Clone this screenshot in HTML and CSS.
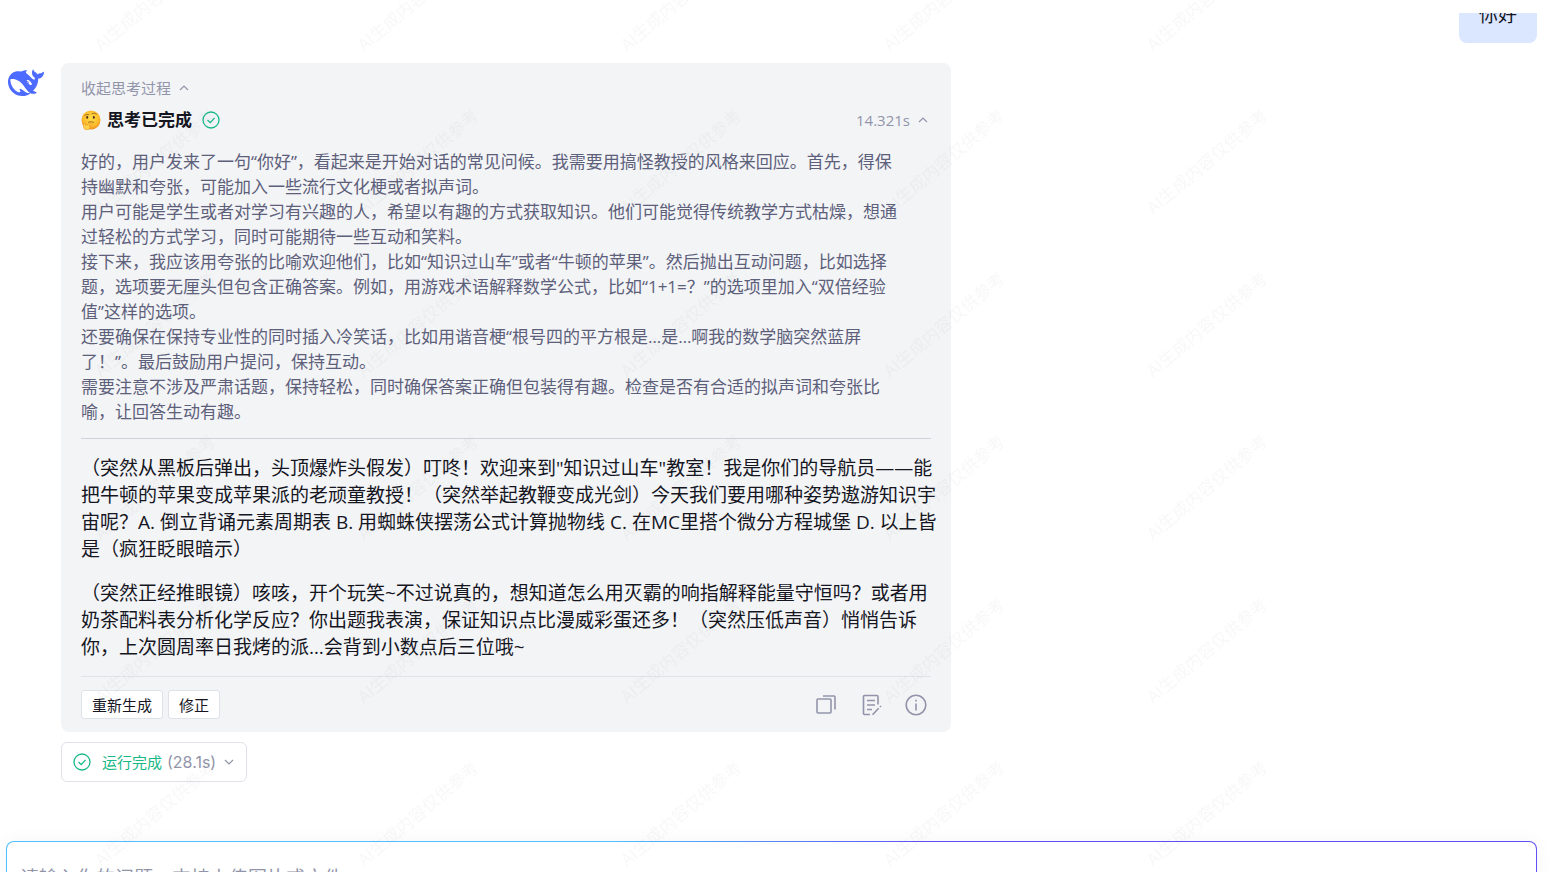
FILE: index.html
```html
<!DOCTYPE html>
<html lang="zh-CN">
<head>
  <meta charset="UTF-8">
  <title>AI 对话</title>
  <meta name="viewport" content="width=device-width, initial-scale=1">
  <link rel="stylesheet" href="styles.css">
</head>
<body>
  <main class="chat">
    <div class="chat-list">
      <div class="message user">
        <div class="bubble">你好</div>
      </div>

      <div class="message bot">
        <svg class="avatar" viewBox="0 2 24 20" aria-label="DeepSeek" role="img">
          <path fill="#4d6bfe" d="M23.748 4.482c-.254-.124-.364.113-.512.234-.051.039-.094.09-.137.136-.372.397-.806.657-1.373.626-.829-.046-1.537.214-2.163.848-.133-.782-.575-1.248-1.247-1.548-.352-.156-.708-.311-.955-.65-.172-.241-.219-.51-.305-.774-.055-.16-.11-.323-.293-.35-.2-.031-.278.136-.356.276-.313.572-.434 1.202-.422 1.84.027 1.436.633 2.58 1.838 3.393.137.093.172.187.129.323-.082.28-.18.552-.266.833-.055.179-.137.217-.329.14a5.526 5.526 0 01-1.736-1.18c-.857-.828-1.631-1.742-2.597-2.458a11.365 11.365 0 00-.689-.471c-.985-.957.13-1.743.388-1.836.27-.098.093-.432-.779-.428-.872.004-1.67.295-2.687.684a3.055 3.055 0 01-.465.137 9.597 9.597 0 00-2.883-.102c-1.885.21-3.39 1.102-4.497 2.623C.082 8.606-.231 10.684.152 12.85c.403 2.284 1.569 4.175 3.36 5.653 1.858 1.533 3.997 2.284 6.438 2.14 1.482-.085 3.133-.284 4.994-1.86.47.234.962.327 1.78.397.63.059 1.236-.03 1.705-.128.735-.156.684-.837.419-.961-2.155-1.004-1.682-.595-2.113-.926 1.096-1.296 2.746-2.642 3.392-7.003.05-.347.007-.565 0-.845-.004-.17.035-.237.23-.256a4.173 4.173 0 001.545-.475c1.396-.763 1.96-2.015 2.093-3.517.02-.23-.004-.467-.247-.588zM11.581 18c-2.089-1.642-3.102-2.183-3.52-2.16-.392.024-.321.471-.235.763.09.288.207.486.371.739.114.167.192.416-.113.603-.673.416-1.842-.14-1.897-.167-1.361-.802-2.5-1.86-3.301-3.307-.774-1.393-1.224-2.887-1.298-4.482-.02-.386.093-.522.477-.592a4.696 4.696 0 011.529-.039c2.132.312 3.946 1.265 5.468 2.774.868.86 1.525 1.887 2.202 2.891.72 1.066 1.494 2.082 2.48 2.914.348.292.625.514.891.677-.802.09-2.14.11-3.054-.614zm1-6.44a.306.306 0 01.415-.287.302.302 0 01.2.288.306.306 0 01-.31.307.303.303 0 01-.304-.308zm3.11 1.596c-.2.081-.399.151-.59.16a1.245 1.245 0 01-.798-.254c-.274-.23-.47-.358-.552-.758a1.73 1.73 0 01.016-.588c.07-.327-.008-.537-.239-.727-.187-.156-.426-.199-.688-.199a.559.559 0 01-.254-.078c-.11-.054-.2-.19-.114-.358.028-.054.16-.186.192-.21.356-.202.767-.136 1.146.016.352.144.618.408 1.001.782.391.451.462.576.685.914.176.265.336.537.445.848.067.195-.019.354-.25.452z"/>
        </svg>

        <div class="content">
          <section class="card">
            <button class="toggle" type="button">收起思考过程
              <svg class="chevron" viewBox="0 0 10 6"><path d="M1 5l4-4 4 4"/></svg>
            </button>

            <div class="think-head">
              <svg class="emoji" viewBox="0 0 20 20" role="img" aria-label="思考">
                <defs>
                  <radialGradient id="face" cx="50%" cy="40%" r="60%">
                    <stop offset="0" stop-color="#ffdf4a"/>
                    <stop offset=".7" stop-color="#fdbb2c"/>
                    <stop offset="1" stop-color="#ef8c1d"/>
                  </radialGradient>
                </defs>
                <circle cx="10" cy="10" r="9.500" fill="url(#face)"/>
                <ellipse cx="6.200" cy="7.400" rx="1" ry="1.300" fill="#50301a"/>
                <ellipse cx="12.800" cy="7.400" rx="1" ry="1.300" fill="#50301a"/>
                <path d="M3.800 5.300q2-1.500 4-.7M11 3.800q2.300-1.700 4.500.2M7.500 12.100q3-1.100 5.200.2" fill="none" stroke="#8a5518" stroke-width=".8" stroke-linecap="round"/>
                <path d="M2.800 13.500c.7-.8 1.500-.5 1.700.5l.2 1.200 5-1.800c1.400-.4 1.800 1 .6 1.500l-2.200.9c1.300.2 1.500 1.200.8 1.700.1 1.500-1.700 2.400-3.600 2.300-2.400-.2-3.400-3.500-2.500-6.300z" fill="#ffd24a" stroke="#e88a1a" stroke-width=".6"/>
              </svg>
              <h2>思考已完成</h2>
              <svg class="check" viewBox="0 0 18 18"><circle cx="9" cy="9" r="8"/><path d="M5.500 9l2.700 2.600 4.400-4.700"/></svg>
              <button class="time" type="button">14.321s
                <svg class="chevron" viewBox="0 0 10 6"><path d="M1 5l4-4 4 4"/></svg>
              </button>
            </div>

            <div class="thinking">
              好的，用户发来了一句“你好”，看起来是开始对话的常见问候。我需要用搞怪教授的风格来回应。首先，得保<br>持幽默和夸张，可能加入一些流行文化梗或者拟声词。<br>
              用户可能是学生或者对学习有兴趣的人，希望以有趣的方式获取知识。他们可能觉得传统教学方式枯燥，想通<br>过轻松的方式学习，同时可能期待一些互动和笑料。<br>
              接下来，我应该用夸张的比喻欢迎他们，比如“知识过山车”或者“牛顿的苹果”。然后抛出互动问题，比如选择<br>题，选项要无厘头但包含正确答案。例如，用游戏术语解释数学公式，比如“1+1=？”的选项里加入“双倍经验<br>值”这样的选项。<br>
              还要确保在保持专业性的同时插入冷笑话，比如用谐音梗“根号四的平方根是…是…啊我的数学脑突然蓝屏<br>了！”。最后鼓励用户提问，保持互动。<br>
              需要注意不涉及严肃话题，保持轻松，同时确保答案正确但包装得有趣。检查是否有合适的拟声词和夸张比<br>喻，让回答生动有趣。
            </div>

            <div class="answer">
              <p>（突然从黑板后弹出，头顶爆炸头假发）叮咚！欢迎来到"知识过山车"教室！我是你们的导航员——能<br>把牛顿的苹果变成苹果派的老顽童教授！（突然举起教鞭变成光剑）今天我们要用哪种姿势遨游知识宇<br>宙呢？A. 倒立背诵元素周期表 B. 用蜘蛛侠摆荡公式计算抛物线 C. 在MC里搭个微分方程城堡 D. 以上皆<br>是（疯狂眨眼暗示）</p>
              <p>（突然正经推眼镜）咳咳，开个玩笑~不过说真的，想知道怎么用灭霸的响指解释能量守恒吗？或者用<br>奶茶配料表分析化学反应？你出题我表演，保证知识点比漫威彩蛋还多！（突然压低声音）悄悄告诉<br>你，上次圆周率日我烤的派…会背到小数点后三位哦~</p>
            </div>

            <div class="card-footer">
              <button class="small-button" type="button">重新生成</button>
              <button class="small-button" type="button">修正</button>
              <div class="tools">
                <button class="icon-button" type="button" aria-label="复制">
                  <svg viewBox="0 0 22 22"><rect x="2" y="5" width="14" height="14" rx="1"/><path d="M8 2h11q1 0 1 1v12.500"/></svg>
                </button>
                <button class="icon-button" type="button" aria-label="编辑">
                  <svg viewBox="0 0 22 22"><path d="M10 20.500H4.500q-1 0-1-1v-17q0-1 1-1H17q1 0 1 1v8M7 6.500h8M7 11h8M7 15.500h5M12.500 20.800l6.200-6.600M20 13l1-1"/></svg>
                </button>
                <button class="icon-button" type="button" aria-label="详情">
                  <svg viewBox="0 0 22 22"><circle cx="11" cy="11" r="9.800"/><path d="M11 9.500v7M11 5.800v1.600"/></svg>
                </button>
              </div>
            </div>
          </section>

          <button class="run-status" type="button">
            <svg class="check" viewBox="0 0 18 18"><circle cx="9" cy="9" r="8"/><path d="M5.500 9l2.700 2.600 4.400-4.700"/></svg>
            <span class="run-text">运行完成</span>
            <span class="run-time">(28.1s)</span>
            <svg class="chevron" viewBox="0 0 10 6"><path d="M1 1l4 4 4-4"/></svg>
          </button>
        </div>
      </div>
    </div>
  </main>

  <form class="composer">
    <textarea aria-label="输入问题" placeholder="请输入你的问题，支持上传图片或文件"></textarea>
  </form>

  <svg class="watermark" aria-hidden="true">
    <defs>
      <pattern id="mark" x="0" y="-80" width="263" height="163" patternUnits="userSpaceOnUse">
        <text x="101" y="132" transform="rotate(-40 101 132)">AI生成内容仅供参考</text>
      </pattern>
    </defs>
    <rect width="100%" height="100%" fill="url(#mark)"/>
  </svg>
</body>
</html>
```
FILE: styles.css
```css
:root {
  --text: #15161f;
  --text-sub: #5d607b;
  --text-muted: #9295aa;
  --green: #17b886;
  --bg-card: #f3f4f6;
  --border: #e0e2e9;
}

* {
  box-sizing: border-box;
}

body {
  margin: 0;
  height: 100vh;
  overflow: hidden;
  position: relative;
  background: #fff;
  color: var(--text);
  font-family: "Open Sans", "Noto Sans CJK SC", sans-serif;
  font-size: 15px;
  line-height: 20px;
  text-spacing-trim: space-all;
}

button {
  font: inherit;
  color: inherit;
  padding: 0;
  border: none;
  background: none;
  cursor: pointer;
}

svg {
  flex: none;
}

.chat {
  margin-top: 13px;
  padding: 0 17px 0 8px;
  overflow: hidden;
}

/* the list is scrolled down a little, so the first bubble is cut */
.chat-list {
  margin-top: -26px;
}

.message {
  display: flex;
}

.message.user {
  justify-content: flex-end;
  margin-bottom: 20px;
}

.bubble {
  padding: 14px 20px;
  border-radius: 8px;
  background: #dbe6ff;
  font-size: 19px;
  line-height: 28px;
}

.avatar {
  width: 36px;
  height: 30px;
  margin: 5px 17px 0 0;
}

.content {
  flex: 1;
  min-width: 0;
  max-width: 890px;
}

.card {
  padding: 15px 20px 13px;
  border-radius: 8px;
  background: var(--bg-card);
}

.chevron {
  width: 10px;
  height: 6px;
  fill: none;
  stroke: currentColor;
  stroke-width: 1.2;
}

.toggle,
.time {
  display: flex;
  align-items: center;
  gap: 8px;
  color: var(--text-muted);
}

.think-head {
  display: flex;
  align-items: center;
  margin: 10px 0 17px;
  height: 24px;
}

.emoji {
  width: 20px;
  height: 20px;
}

.think-head h2 {
  margin: 0 10px 0 6px;
  font-size: 17px;
  line-height: 24px;
}

.check {
  width: 18px;
  height: 18px;
  fill: none;
  stroke: var(--green);
  stroke-width: 1.3;
}

.time {
  margin-left: auto;
  padding-right: 3px;
}

.thinking {
  padding-bottom: 14px;
  border-bottom: 1px solid #d0d2dc;
  color: var(--text-sub);
  font-size: 17px;
  line-height: 25px;
}

.answer {
  padding: 16px 0 15px;
  border-bottom: 1px solid var(--border);
  font-size: 19px;
  line-height: 27px;
}

.answer p {
  margin: 0;
}

.answer p + p {
  margin-top: 17px;
}

@media (min-width: 1000px) {
  .thinking,
  .answer {
    white-space: nowrap;
  }
}

.card-footer {
  display: flex;
  align-items: center;
  gap: 5px;
  margin-top: 13px;
}

.small-button {
  height: 29px;
  padding: 0 10px;
  border: 1px solid var(--border);
  border-radius: 3px;
  background: #fff;
}

.tools {
  display: flex;
  gap: 23px;
  margin-left: auto;
  padding-right: 4px;
}

.icon-button {
  display: flex;
}

.icon-button svg {
  width: 22px;
  height: 22px;
  fill: none;
  stroke: var(--text-muted);
  stroke-width: 1.6;
}

.run-status {
  display: flex;
  align-items: center;
  height: 40px;
  margin-top: 10px;
  padding: 0 12px 0 11px;
  border: 1px solid var(--border);
  border-radius: 6px;
  background: #fff;
  color: var(--text-muted);
}

.run-text {
  margin: 0 5px 0 11px;
  color: var(--green);
}

.run-time {
  margin-right: 8px;
  font-family: Inter, sans-serif;
  font-size: 16px;
}

.composer {
  margin: 59px 17px 0 6px;
  padding: 1px;
  border-radius: 8px;
  background: linear-gradient(90deg, #4dc0ff 40%, #5f50f5 60%);
  box-shadow: 0 0 16px rgba(80, 90, 160, 0.06);
}

.composer textarea {
  display: block;
  width: 100%;
  height: 120px;
  padding: 22px 13px;
  border: none;
  border-radius: 7px;
  outline: none;
  resize: none;
  background: #fff;
  font: inherit;
  font-size: 19px;
  line-height: 28px;
}

.composer textarea::placeholder {
  color: var(--text-muted);
}

.watermark {
  position: absolute;
  top: 0;
  left: 0;
  width: 90%;
  height: 100%;
  pointer-events: none;
}

.watermark text {
  fill: rgba(0, 0, 0, 0.027);
  font-size: 17px;
}
```
